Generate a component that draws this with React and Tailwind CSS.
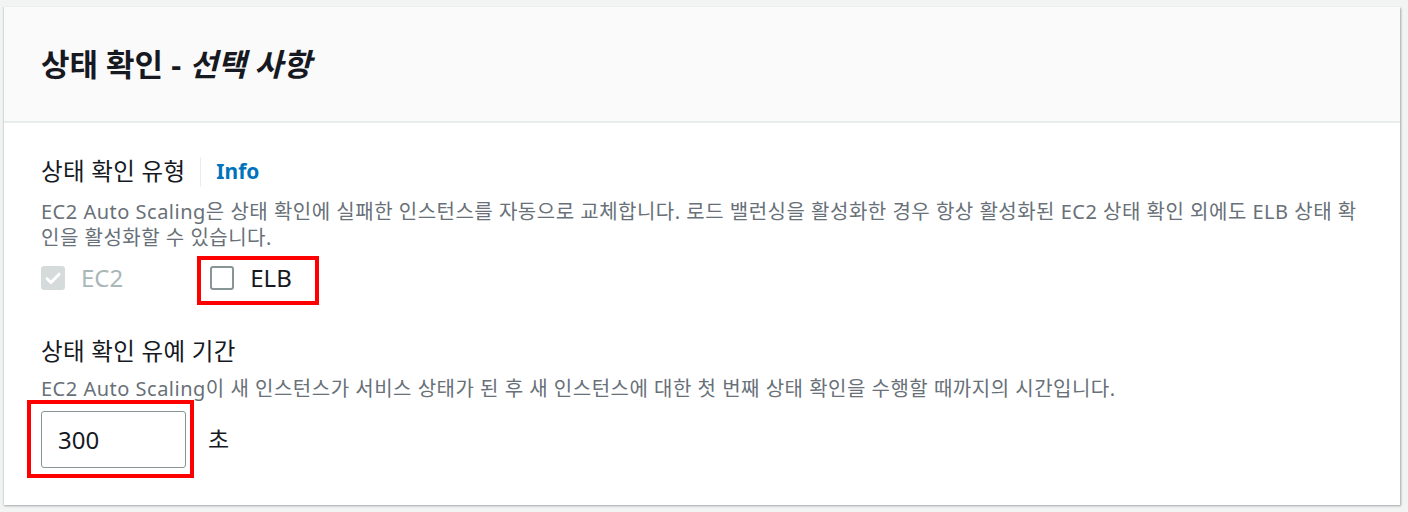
// Health check panel (Korean AWS console style)

const FONT = { fontFamily: '"Noto Sans", "Noto Sans CJK KR", sans-serif' }

function Checkbox({ checked, disabled }) {
  if (checked) {
    return (
      <span
        className={`flex h-6 w-6 items-center justify-center rounded-[3px] ${
          disabled ? 'bg-[#d5dbdb]' : 'bg-[#0073bb]'
        }`}
      >
        <svg viewBox="0 0 16 16" className="h-[18px] w-[18px]" fill="none" stroke="#fff" strokeWidth="2.6">
          <path d="M2.8 8.6l3.4 3.4L13.4 4.6" strokeLinecap="round" strokeLinejoin="round" />
        </svg>
      </span>
    )
  }
  return <span className="h-6 w-6 rounded-[3px] border-2 border-[#879596] bg-white" />
}

function RedBox({ className }) {
  return <span className={`pointer-events-none absolute border-4 border-[#ff0000] ${className}`} />
}

export default function App() {
  return (
    <div style={FONT} className="min-h-[512px] bg-[#f2f3f3] pl-[3px] pt-[7px] pr-[8px]">
      <div className="w-[1397px] overflow-hidden border-l border-[#d5dbdb] bg-white shadow-[1px_1px_2px_rgba(0,28,36,0.35)]">
        <div className="flex h-[116px] items-center border-b-[2px] border-[#eaeded] bg-[#fafafa] px-[37px]">
          <h2 className="text-[31px] font-bold leading-none text-[#16191f]">
            상태 확인 - <i>선택 사항</i>
          </h2>
        </div>

        <div className="px-[37px] pt-[34px] pb-[37px]">
          <div className="flex h-[30px] items-center">
            <span className="text-[23.5px] tracking-[0.3px] text-[#16191f]">상태 확인 유형</span>
            <span className="mx-[15px] h-[30px] w-px bg-[#eaeded]" />
            <span className="text-[21px] font-bold text-[#0073bb]">Info</span>
          </div>
          <p className="mt-[12px] text-[20px] leading-[26px] tracking-[0.5px] text-[#687078]">
            EC2 Auto Scaling은 상태 확인에 실패한 인스턴스를 자동으로 교체합니다. 로드 밸런싱을 활성화한 경우 항상 활성화된 EC2 상태 확인 외에도 ELB 상태 확인을 활성화할 수 있습니다.
          </p>

          <div className="mt-[15px] flex h-6 items-center">
            <label className="flex items-center gap-[16px]">
              <Checkbox checked disabled />
              <span className="text-[24px] leading-6 text-[#aab7b8]">EC2</span>
            </label>
            <label className="relative ml-[87px] flex items-center gap-[16px]">
              <Checkbox />
              <span className="text-[24px] leading-6 text-[#16191f]">ELB</span>
              <RedBox className="-left-[13px] -top-[10px] -right-[27px] -bottom-[15px]" />
            </label>
          </div>

          <div className="mt-[47px] flex h-[30px] items-center text-[23.5px] tracking-[0.3px] text-[#16191f]">
            상태 확인 유예 기간
          </div>
          <p className="mt-[9px] text-[20px] leading-[26px] tracking-[0.5px] text-[#687078]">
            EC2 Auto Scaling이 새 인스턴스가 서비스 상태가 된 후 새 인스턴스에 대한 첫 번째 상태 확인을 수행할 때까지의 시간입니다.
          </p>

          <div className="mt-[9px] flex items-center">
            <div className="relative">
              <div className="flex h-[57px] w-[145px] items-center rounded-[3px] border border-[#879596] px-[16px] text-[24px] text-[#16191f]">
                300
              </div>
              <RedBox className="-left-[14px] -top-[11px] -right-[8px] -bottom-[10px]" />
            </div>
            <span className="ml-[22px] text-[23px] text-[#16191f]">초</span>
          </div>
        </div>
      </div>
    </div>
  )
}
